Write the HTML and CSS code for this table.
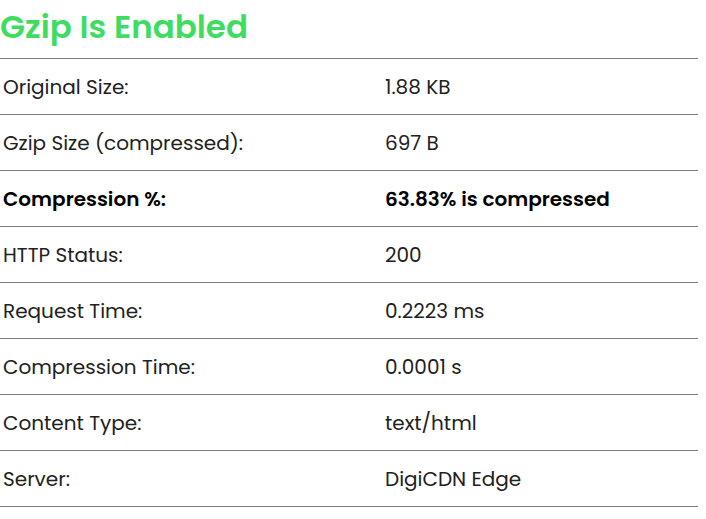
FILE: index.html
```html
<!DOCTYPE html>
<html>
<head>
<meta charset="utf-8">
<link rel="stylesheet" href="styles.css">
</head>
<body>
<div class="wrap">
  <h1 class="title">Gzip Is Enabled</h1>
  <table class="info">
    <colgroup><col class="c1"><col class="c2"></colgroup>
    <tr><td class="k">Original Size:</td><td class="v">1.88 KB</td></tr>
    <tr><td class="k">Gzip Size (compressed):</td><td class="v">697 B</td></tr>
    <tr class="bold"><td class="k">Compression %:</td><td class="v">63.83% is compressed</td></tr>
    <tr><td class="k">HTTP Status:</td><td class="v">200</td></tr>
    <tr><td class="k">Request Time:</td><td class="v">0.2223 ms</td></tr>
    <tr><td class="k">Compression Time:</td><td class="v">0.0001 s</td></tr>
    <tr><td class="k">Content Type:</td><td class="v">text/html</td></tr>
    <tr><td class="k">Server:</td><td class="v">DigiCDN Edge</td></tr>
  </table>
</div>
</body>
</html>
```
FILE: styles.css
```css
html, body {
  margin: 0;
  padding: 0;
  background: #fff;
}
.wrap {
  width: 698px;
  font-family: "Poppins", "Inter", "Liberation Sans", sans-serif;
  color: #212121;
}
.title {
  margin: 0;
  height: 58px;
  box-sizing: border-box;
  padding-top: 6px;
  font-size: 32.5px;
  font-weight: 600;
  line-height: 42px;
  color: #3fdc62;
}
.info {
  width: 698px;
  table-layout: fixed;
  border-collapse: collapse;
  border-spacing: 0;
}
.c1 { width: 385px; }
.info td {
  height: 55px;
  padding: 0 0 0 3px;
  border-top: 1px solid #7c7c7c;
  border-bottom: 1px solid #7c7c7c;
  font-size: 20px;
  font-weight: 400;
  vertical-align: middle;
}
.info td.v {
  padding-left: 0;
}
.info tr.bold td {
  font-weight: 600;
  color: #000;
}
```
